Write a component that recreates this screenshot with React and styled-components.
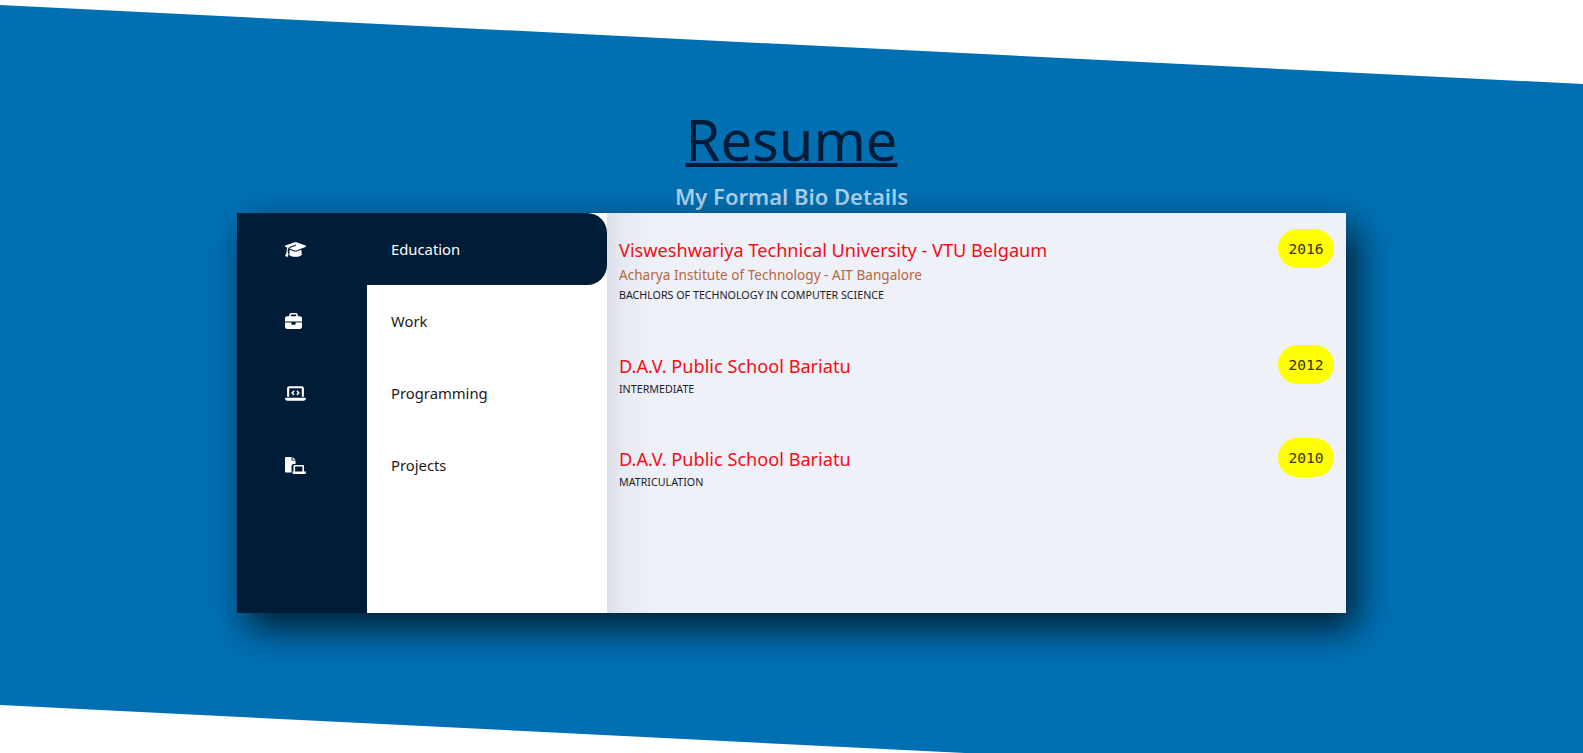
import React from "react";
import styled, { createGlobalStyle } from "styled-components";
import { FaGraduationCap, FaBriefcase, FaLaptopCode } from "react-icons/fa6";

const Global = createGlobalStyle`
  html, body { margin: 0; padding: 0; background: #fff; overflow: hidden; }
  * { box-sizing: border-box; }
`;

const Section = styled.section`
  height: 753px;
  background: #0070b3;
  clip-path: polygon(0 5px, 100% 84px, 100% 100%, 965px 100%, 0 705px);
  display: flex;
  flex-direction: column;
  align-items: center;
  padding-top: 101px;
  font-family: "Noto Sans", sans-serif;
`;

const Title = styled.h2`
  margin: 0;
  font-size: 56px;
  line-height: 76px;
  font-weight: 400;
  color: #011c37;
  text-decoration: underline;
  text-decoration-thickness: 4px;
  text-underline-offset: 2px;
`;

const Subtitle = styled.p`
  margin: 2px 0 0;
  font-size: 22px;
  line-height: 34px;
  font-weight: 600;
  color: #aed2ee;
`;

const Card = styled.div`
  width: 1109px;
  height: 400px;
  display: flex;
  box-shadow: 10px 15px 35px rgba(0, 0, 0, 0.75);
`;

const Rail = styled.div`
  width: 130px;
  flex: none;
  background: #011c37;
`;

const RailIcon = styled.div`
  height: 72px;
  display: flex;
  align-items: center;
  padding-left: 48px;
  color: #fff;

  svg {
    width: ${(p) => (p.$wide ? 21 : 17)}px;
    height: 17px;
  }
`;

const Tabs = styled.div`
  width: 240px;
  flex: none;
  background: #fff;
`;

const Tab = styled.div`
  height: 72px;
  display: flex;
  align-items: center;
  padding-left: 24px;
  font-size: 14.8px;
  color: ${(p) => (p.$active ? "#fff" : "#1c1c1c")};
  background: ${(p) => (p.$active ? "#011c37" : "transparent")};
  border-radius: ${(p) => (p.$active ? "0 20px 20px 0" : "0")};
`;

const Content = styled.div`
  flex: 1;
  background: linear-gradient(90deg, #dcdfe8 0, #e8ebf3 18px, #eef1f8 48px);
  padding: 16px 12px 0;
`;

const Row = styled.div`
  display: flex;
  justify-content: space-between;
  align-items: flex-start;
  margin-bottom: ${(p) => (p.$extended ? 42 : 41)}px;
`;

const Info = styled.div`
  padding-top: 9px;
`;

const School = styled.div`
  font-size: 18.15px;
  line-height: 25px;
  color: #f40d16;
`;

const Institute = styled.div`
  font-size: 13.6px;
  line-height: 22px;
  color: #b5683f;
  margin: 1px 0 -1px;
`;

const Degree = styled.div`
  font-size: 10.7px;
  line-height: 16px;
  margin-top: 2px;
  color: #1d2027;
`;

const Year = styled.div`
  width: 56px;
  height: 39px;
  border-radius: 20px;
  background: #ffff00;
  display: flex;
  align-items: center;
  justify-content: center;
  font-family: "DejaVu Sans Mono", monospace;
  font-size: 14.6px;
  color: #3d3312;
`;

const FileLaptop = () => (
  <svg viewBox="0 0 21 17" fill="currentColor">
    <path d="M1 0h5.500v3.500h4v3.500H8.500a2 2 0 0 0-2 2v6.500H1a1 1 0 0 1-1-1V1a1 1 0 0 1 1-1z" />
    <path d="M7.500 0l3 2.700h-3z" />
    <path d="M9.500 8h8.500a1 1 0 0 1 1 1v5.500h2v1a1.500 1.500 0 0 1-1.500 1.500H9a1.500 1.500 0 0 1-1.500-1.500v-1h1V9a1 1 0 0 1 1-1zm.6 1.600v4.900h7.300V9.600z" fillRule="evenodd" />
  </svg>
);

const tabs = [
  { label: "Education", Icon: FaGraduationCap, wide: true, active: true },
  { label: "Work", Icon: FaBriefcase },
  { label: "Programming", Icon: FaLaptopCode, wide: true },
  { label: "Projects", Icon: FileLaptop, wide: true },
];

const rows = [
  { school: "Visweshwariya Technical University - VTU Belgaum", institute: "Acharya Institute of Technology - AIT Bangalore", degree: "BACHLORS OF TECHNOLOGY IN COMPUTER SCIENCE", year: "2016" },
  { school: "D.A.V. Public School Bariatu", degree: "INTERMEDIATE", year: "2012" },
  { school: "D.A.V. Public School Bariatu", degree: "MATRICULATION", year: "2010" },
];

export default function App() {
  return (
    <>
      <Global />
      <Section>
        <Title>Resume</Title>
        <Subtitle>My Formal Bio Details</Subtitle>
        <Card>
          <Rail>
            {tabs.map(({ label, Icon, wide }) => (
              <RailIcon key={label} $wide={wide}><Icon /></RailIcon>
            ))}
          </Rail>
          <Tabs>
            {tabs.map((t) => (
              <Tab key={t.label} $active={t.active}>{t.label}</Tab>
            ))}
          </Tabs>
          <Content>
            {rows.map((r) => (
              <Row key={r.year} $extended={Boolean(r.institute)}>
                <Info>
                  <School>{r.school}</School>
                  {r.institute && <Institute>{r.institute}</Institute>}
                  <Degree>{r.degree}</Degree>
                </Info>
                <Year>{r.year}</Year>
              </Row>
            ))}
          </Content>
        </Card>
      </Section>
    </>
  );
}
